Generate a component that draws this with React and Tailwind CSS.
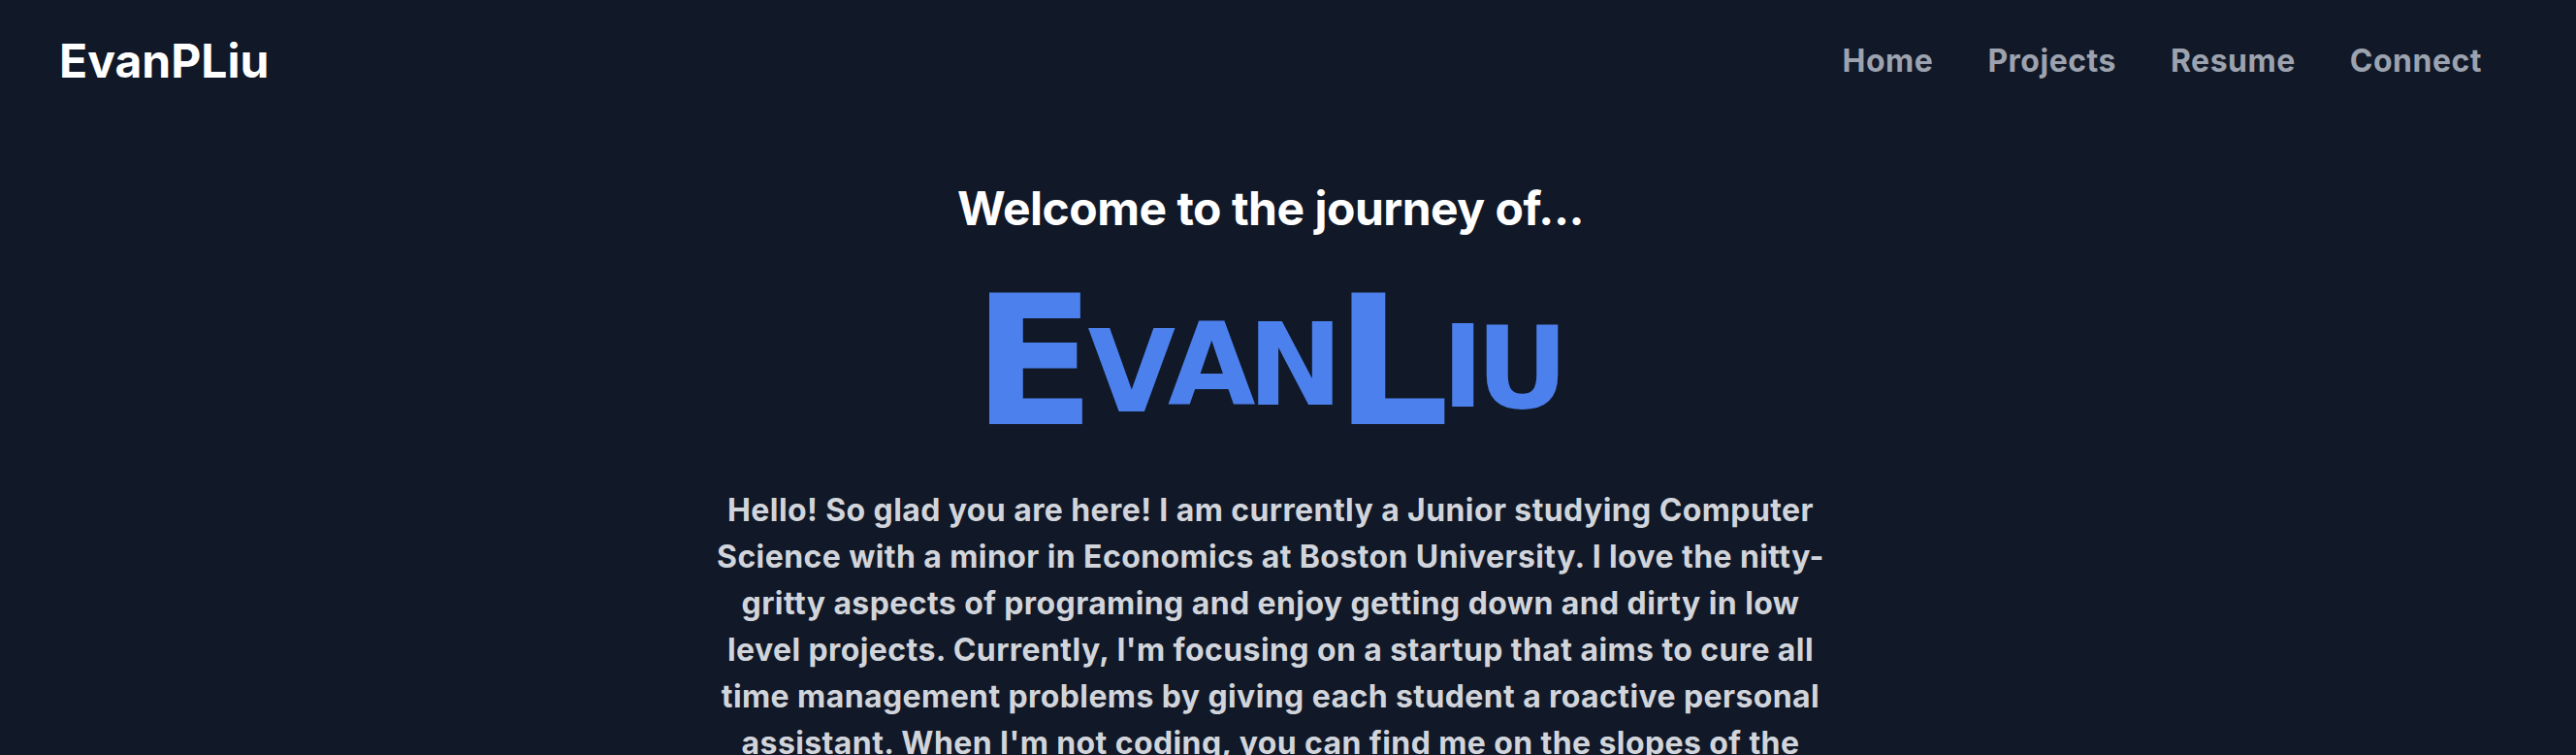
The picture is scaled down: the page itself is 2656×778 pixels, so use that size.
export default function App() {
  const links = ["Home", "Projects", "Resume", "Connect"];

  return (
    <div className="min-h-screen bg-[#111827] font-['Inter',sans-serif]">
      <div className="w-[2620px]">
        {/* NAV */}
        <nav className="h-[125px] flex items-center justify-between px-[61px]">
          <div className="text-[48px] leading-[64px] font-bold text-white">EvanPLiu</div>
          <div className="flex items-center gap-[56px]">
            {links.map((l) => (
              <a key={l} href="#" className="text-[32px] leading-[48px] font-bold tracking-[0.5px] text-[#9ca3af]">
                {l}
              </a>
            ))}
          </div>
        </nav>

        {/* HERO */}
        <main className="flex flex-col items-center">
          <h2 className="mt-[58px] text-[48px] leading-[64px] font-bold tracking-[-0.5px] text-white">
            Welcome to the journey of...
          </h2>

          <h1 className="mt-[34px] h-[185px] pr-[8px] text-[185px] leading-none font-bold tracking-[-8px] text-[#4c80ec] font-['DejaVu_Sans',sans-serif] whitespace-nowrap">
            <span>E</span>
            <span className="inline-block text-[117px] -translate-y-[13px]">V</span>
            <span className="inline-block text-[117px] -translate-y-[20px]">A</span>
            <span className="inline-block text-[117px] -translate-y-[20px]">N</span>
            <span>L</span>
            <span className="inline-block text-[117px] -translate-y-[18px]">I</span>
            <span className="inline-block text-[117px] -translate-y-[17px]">U</span>
          </h1>

          <p className="mt-[36px] max-w-[1160px] text-center text-[32px] leading-[48px] font-bold tracking-[0.4px] text-[#d1d5db]">
            Hello! So glad you are here! I am currently a Junior studying Computer Science with a minor in
            Economics at Boston University. I love the nitty-gritty aspects of programing and enjoy getting
            down and dirty in low level projects. Currently, I'm focusing on a startup that aims to cure all
            time management problems by giving each student a roactive personal assistant. When I'm not
            coding, you can find me on the slopes of the mountains or out exploring the city with friends.
          </p>
        </main>
      </div>
    </div>
  );
}
